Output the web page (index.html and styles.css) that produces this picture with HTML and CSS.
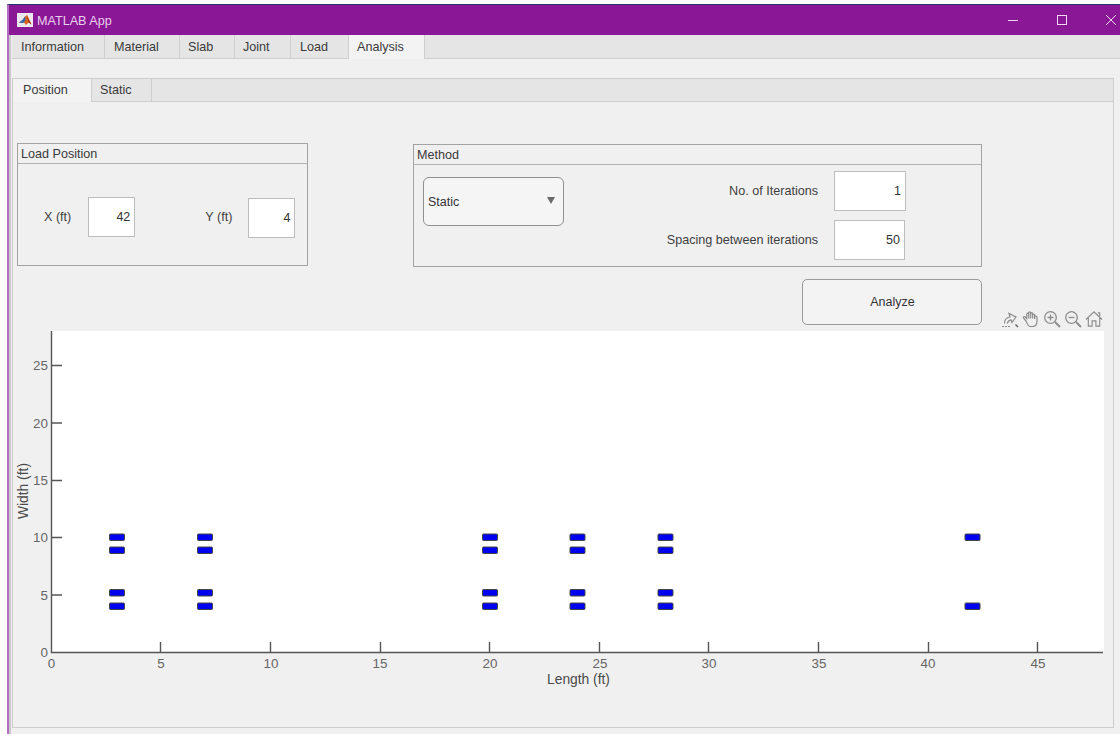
FILE: index.html
```html
<!DOCTYPE html>
<html lang="en">
<head>
<meta charset="utf-8">
<title>MATLAB App</title>
<link rel="stylesheet" href="styles.css">
</head>
<body>
<div class="window">
  <header class="titlebar">
    <svg class="app-icon" width="16" height="14" viewBox="0 0 16 14">
      <rect width="16" height="14" fill="#ece8f2"/>
      <path d="M2 9.5 5.5 7 8 3.5 10 2 12 6.5 14.5 11.5 11.5 9.5 9 12 7 9.5 5 10Z" fill="#d9641c"/>
      <path d="M2 9.5 5.5 7 8 3.5 8.5 7 7 9.5 5 10Z" fill="#2f6db5"/>
      <path d="M10 2 12 6.5 14.5 11.5 11.5 9.5 10.5 5Z" fill="#a8331a"/>
    </svg>
    <span class="app-title">MATLAB App</span>
    <div class="win-controls">
      <svg width="12" height="12" viewBox="0 0 12 12"><path d="M1 6.5H11" stroke="#eed9f1" fill="none"/></svg>
      <svg width="12" height="12" viewBox="0 0 12 12"><rect x="1.5" y="1.5" width="9" height="9" stroke="#eed9f1" fill="none"/></svg>
      <svg width="12" height="12" viewBox="0 0 12 12"><path d="M1 1 11 11M11 1 1 11" stroke="#eed9f1" fill="none"/></svg>
    </div>
  </header>

  <div class="app-body">
    <nav class="tabs main-tabs">
      <span class="tab w-info">Information</span>
      <span class="tab w-material">Material</span>
      <span class="tab w-slab">Slab</span>
      <span class="tab w-joint">Joint</span>
      <span class="tab w-load">Load</span>
      <span class="tab w-analysis active">Analysis</span>
    </nav>

    <section class="tab-group">
      <nav class="tabs inner-tabs">
        <span class="tab w-position active">Position</span>
        <span class="tab w-static">Static</span>
      </nav>

      <div class="tab-content">
        <div class="panels">
          <fieldset class="panel panel-load">
            <div class="panel-title">Load Position</div>
            <div class="panel-body load-fields">
              <label class="lbl lbl-x">X (ft)</label>
              <output class="field field-x">42</output>
              <label class="lbl lbl-y">Y (ft)</label>
              <output class="field field-y">4</output>
            </div>
          </fieldset>

          <fieldset class="panel panel-method">
            <div class="panel-title">Method</div>
            <div class="panel-body method-fields">
              <div class="dropdown"><span>Static</span><i class="caret"></i></div>
              <div class="iterations">
                <div class="iter-row"><label class="lbl">No. of Iterations</label><output class="field field-iter">1</output></div>
                <div class="iter-row"><label class="lbl">Spacing between iterations</label><output class="field field-space">50</output></div>
              </div>
            </div>
          </fieldset>
        </div>

        <div class="actions">
          <button class="analyze" type="button">Analyze</button>
          <div class="axes-toolbar">
            <svg width="18" height="18" viewBox="0 0 18 18" fill="none" stroke="#8c8c8c" stroke-width="1.2">
              <path d="M3.5 13.5C3.5 9.5 5.5 7.5 9 7L8 3.5 15 7 11 12.5 10 9.8C8 10.2 6.8 11.5 6.3 13.5"/>
              <path d="M1 16.5H9" stroke-dasharray="2 1"/>
              <path d="M14.5 14.5 17 17" stroke="#666" stroke-width="1.5"/>
            </svg>
            <svg width="18" height="18" viewBox="0 0 18 18" fill="none" stroke="#8c8c8c" stroke-width="1.2">
              <path d="M4 11 1.6 8.2C.8 7 2.3 6 3.3 7L4.8 8.5V4C4.8 2.7 6.6 2.7 6.6 4V3C6.6 1.5 8.6 1.5 8.6 3V3.6C8.6 2.3 10.6 2.3 10.6 3.8V5C10.6 3.8 12.6 3.8 12.6 5.2V6.5C13 5.8 15 5.7 15 7.3V11C15 14 13.5 16.5 10.5 16.5H8C6 16.5 5 13 4 11Z"/>
              <path d="M6.8 3.5V8.5M8.7 3V8.5M10.7 4V8.5M12.7 5.5V9"/>
            </svg>
            <svg width="18" height="18" viewBox="0 0 18 18" fill="none" stroke="#8c8c8c" stroke-width="1.3">
              <circle cx="7.5" cy="7.5" r="5.8"/><path d="M12 12 17 17" stroke-width="1.8"/><path d="M4.5 7.5H10.5M7.5 4.5V10.5"/>
            </svg>
            <svg width="18" height="18" viewBox="0 0 18 18" fill="none" stroke="#8c8c8c" stroke-width="1.3">
              <circle cx="7.5" cy="7.5" r="5.8"/><path d="M12 12 17 17" stroke-width="1.8"/><path d="M4.5 7.5H10.5"/>
            </svg>
            <svg width="18" height="18" viewBox="0 0 19 18" fill="none" stroke="#8c8c8c" stroke-width="1.2">
              <path d="M1 9.5 9.5 1.5 18 9.5M3.5 8V16.5H7.5V11H11.5V16.5H15.5V8M13.5 2.5H15.5V6"/>
            </svg>
          </div>
        </div>

        <svg class="plot" width="1092" height="368" viewBox="13 331 1092 368">
          <rect x="52" y="331" width="1052" height="321" fill="#fff"/>
          <g stroke="#555" fill="none" stroke-width="1.4">
            <path d="M51.5 331V652.5H1103"/>
            <path d="M160.5 652V642M270.5 652V642M380.5 652V642M489.5 652V642M599.5 652V642M708.5 652V642M818.5 652V642M928.5 652V642M1037.5 652V642"/>
            <path d="M52 595H62M52 537.5H62M52 480.5H62M52 423H62M52 365.5H62"/>
          </g>
          <g class="tick" text-anchor="middle">
            <text x="51.5" y="668">0</text><text x="161" y="668">5</text><text x="271" y="668">10</text>
            <text x="380" y="668">15</text><text x="490" y="668">20</text><text x="600" y="668">25</text>
            <text x="709" y="668">30</text><text x="819" y="668">35</text><text x="928" y="668">40</text>
            <text x="1038" y="668">45</text>
          </g>
          <g class="tick" text-anchor="end">
            <text x="48" y="657">0</text><text x="48" y="600">5</text><text x="48" y="542">10</text>
            <text x="48" y="485">15</text><text x="48" y="428">20</text><text x="48" y="370">25</text>
          </g>
          <text class="axis-label" x="578.5" y="684" text-anchor="middle">Length (ft)</text>
          <text class="axis-label" text-anchor="middle" transform="translate(27.5 491) rotate(-90)">Width (ft)</text>
          <g fill="#0000f0" stroke="#444" stroke-width="1">
            <rect x="109.5" y="534" width="15" height="6.5" rx="1"/><rect x="109.5" y="547" width="15" height="6.5" rx="1"/><rect x="109.5" y="589.5" width="15" height="6.5" rx="1"/><rect x="109.5" y="603" width="15" height="6.5" rx="1"/>
            <rect x="197.5" y="534" width="15" height="6.5" rx="1"/><rect x="197.5" y="547" width="15" height="6.5" rx="1"/><rect x="197.5" y="589.5" width="15" height="6.5" rx="1"/><rect x="197.5" y="603" width="15" height="6.5" rx="1"/>
            <rect x="482.5" y="534" width="15" height="6.5" rx="1"/><rect x="482.5" y="547" width="15" height="6.5" rx="1"/><rect x="482.5" y="589.5" width="15" height="6.5" rx="1"/><rect x="482.5" y="603" width="15" height="6.5" rx="1"/>
            <rect x="570" y="534" width="15" height="6.5" rx="1"/><rect x="570" y="547" width="15" height="6.5" rx="1"/><rect x="570" y="589.5" width="15" height="6.5" rx="1"/><rect x="570" y="603" width="15" height="6.5" rx="1"/>
            <rect x="658" y="534" width="15" height="6.5" rx="1"/><rect x="658" y="547" width="15" height="6.5" rx="1"/><rect x="658" y="589.5" width="15" height="6.5" rx="1"/><rect x="658" y="603" width="15" height="6.5" rx="1"/>
            <rect x="965" y="534" width="15" height="6.5" rx="1"/><rect x="965" y="603" width="15" height="6.5" rx="1"/>
          </g>
        </svg>
      </div>
    </section>
  </div>
</div>
</body>
</html>
```
FILE: styles.css
```css
* { box-sizing: border-box; }

html, body {
  margin: 0;
  height: 100%;
  overflow: hidden;
  background: #fff;
}

body {
  padding: 4px 0 0 7px;
  font-family: "Liberation Sans", Arial, sans-serif;
  font-size: 12.5px;
  color: #333;
}

.window {
  height: 730px;
  display: flex;
  flex-direction: column;
  border-left: 2px solid #b26fc0;
  border-top: 1px solid #1d3b66;
}

/* title bar */
.titlebar {
  height: 30px;
  flex: none;
  display: flex;
  align-items: center;
  padding-left: 8px;
  background: #8a1795;
}

.app-icon { flex: none; }

.app-title {
  margin-left: 4px;
  padding-top: 2px;
  font-size: 12.6px;
  color: #e8d0ec;
}

.win-controls {
  margin-left: auto;
  display: flex;
  gap: 37px;
  padding-right: 3px;
}

/* tab strips */
.app-body {
  flex: 1;
  min-height: 0;
  display: flex;
  flex-direction: column;
  padding-left: 1px;
  background: #f0f0f0;
  border-left: 2px solid #c9c9c9;
}

.tabs {
  flex: none;
  display: flex;
  background: #e5e5e5;
  border-bottom: 1px solid #cfcfcf;
}

.tab {
  display: flex;
  align-items: center;
  padding-left: 9px;
  border-right: 1px solid #cfcfcf;
  font-size: 12.6px;
  color: #3a3a3a;
}

.tab.active { background: #f3f3f3; margin-bottom: -1px; padding-bottom: 1px; }

.main-tabs { height: 24px; }
.inner-tabs { height: 23px; }

.w-info { width: 93px; }
.w-material { width: 75px; }
.w-slab { width: 55px; padding-left: 8px; }
.w-joint { width: 56px; padding-left: 8px; }
.w-load { width: 58px; }
.w-analysis { width: 76px; padding-left: 8px; }
.w-position { width: 79px; padding-left: 10px; }
.w-static { width: 60px; padding-left: 8px; }

.tab-group {
  width: 1102px;
  height: 650px;
  margin-top: 19px;
  display: flex;
  flex-direction: column;
  border: 1px solid #cdcdcd;
}

.tab-content {
  flex: 1;
  min-height: 0;
  padding: 41px 0 0 4px;
  background: #f0f0f0;
}

/* control panels */
.panels {
  display: flex;
  gap: 105px;
  align-items: flex-start;
}

.panel {
  margin: 0;
  padding: 0;
  min-width: 0;
  border: 1px solid #a3a3a3;
  background: #f0f0f0;
}

.panel-title {
  height: 20px;
  padding: 3px 0 0 3px;
  border-bottom: 1px solid #b4b4b4;
  font-size: 12.6px;
  color: #3a3a3a;
}

.panel-load { width: 291px; height: 123px; }
.panel-method { width: 569px; height: 123px; margin-top: 1px; }

.lbl { font-size: 12.6px; color: #3f3f3f; }

.field {
  display: flex;
  align-items: center;
  justify-content: flex-end;
  padding-right: 4px;
  background: #fff;
  border: 1px solid #bdbdbd;
  font-size: 12.5px;
  color: #333;
}

.load-fields {
  display: flex;
  align-items: flex-start;
  padding: 33px 0 0 26px;
}

.lbl-x { margin-top: 13px; }
.field-x { width: 47px; height: 40px; margin-left: 17px; }
.lbl-y { margin: 13px 0 0 70px; }
.field-y { width: 47px; height: 40px; margin: 1px 0 0 16px; }

.method-fields {
  display: flex;
  padding: 12px 0 0 9px;
}

.dropdown {
  width: 141px;
  height: 49px;
  display: flex;
  align-items: center;
  justify-content: space-between;
  padding: 0 8px 0 4px;
  background: #f5f5f5;
  border: 1px solid #8f8f8f;
  border-radius: 6px;
  font-size: 12.5px;
  color: #333;
}

.caret {
  width: 0;
  height: 0;
  margin-bottom: 2px;
  border-left: 4.5px solid transparent;
  border-right: 4.5px solid transparent;
  border-top: 7px solid #6a6a6a;
}

.iterations {
  margin: -6px 0 0 0;
  flex: 1;
  display: flex;
  flex-direction: column;
  gap: 9px;
  padding-right: 75px;
}

.iter-row {
  display: flex;
  justify-content: flex-end;
  align-items: center;
  gap: 16px;
}

.field-iter { width: 72px; height: 40px; }
.field-space { width: 71px; height: 40px; margin-right: 1px; }

/* analyze button and plot toolbar */
.actions {
  position: relative;
  height: 64px;
  padding: 12px 0 0 785px;
}

.analyze {
  display: block;
  width: 180px;
  height: 46px;
  padding: 0 0 0 1px;
  background: #f3f3f3;
  border: 1px solid #9a9a9a;
  border-radius: 5px;
  font-family: inherit;
  font-size: 12.5px;
  color: #333;
}

.axes-toolbar {
  position: absolute;
  left: 984px;
  top: 43px;
  display: flex;
  gap: 3px;
}

/* plot */
.plot { display: block; margin-left: -4px; }

.tick { font-size: 13.4px; fill: #666; }
.axis-label { font-size: 13.8px; fill: #4a4a4a; }
```
